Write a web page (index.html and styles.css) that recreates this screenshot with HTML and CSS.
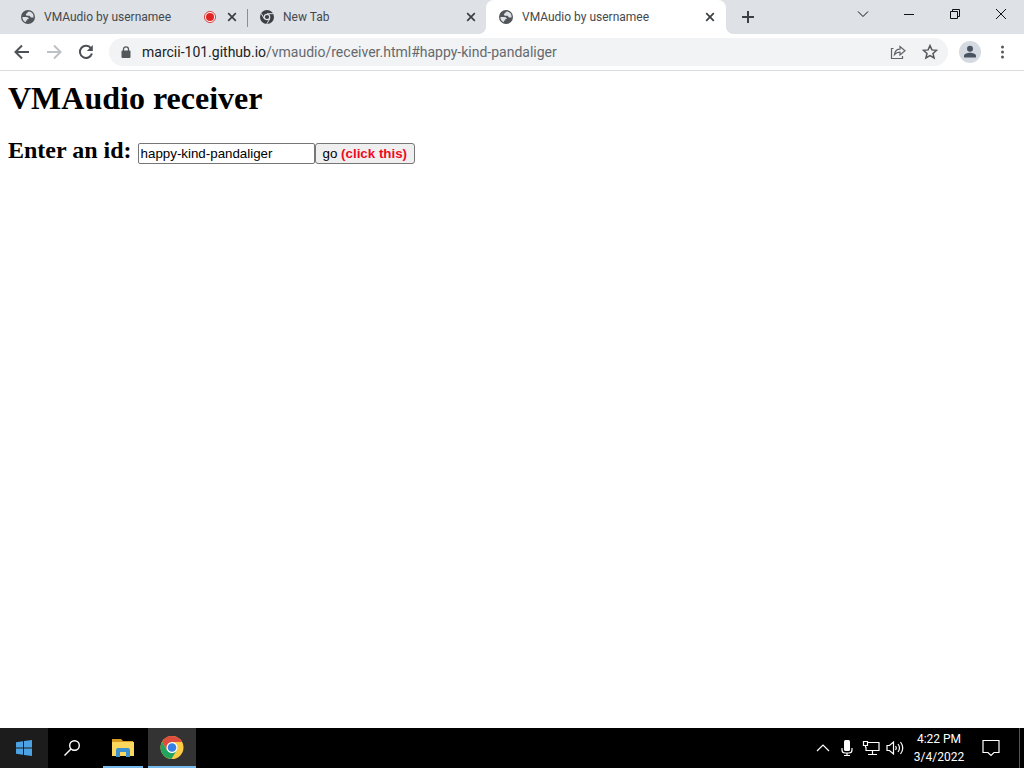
FILE: index.html
```html
<!DOCTYPE html>
<html lang="en">
<head>
<meta charset="utf-8">
<meta name="viewport" content="width=device-width, initial-scale=1">
<title>VMAudio by usernamee</title>
<link rel="stylesheet" href="styles.css">
</head>
<body>
<svg class="defs" aria-hidden="true">
  <symbol id="globe" viewBox="0 0 14 14">
    <circle cx="7" cy="7" r="7" fill="#515559"/>
    <path d="M8.200 1.600C6.200 1.800 6.600 3.200 5.600 3.500 4.300 4 4.700 5.700 6.300 5.700h1.900c1.200 0 1 1.900 2.300 1.900h2A5.500 5.500 0 0 0 8.200 1.600zM1.400 6.900h3.800c1.700 0 2.600.8 2.600 2.100H6.300v1.600H4.900v1.600A5.500 5.500 0 0 1 1.400 6.900z" fill="#dee1e6"/>
  </symbol>
  <symbol id="close" viewBox="0 0 10 10">
    <path d="M1.200 1.200l7.600 7.600M8.800 1.200L1.200 8.800" fill="none" stroke="#3c4043" stroke-width="1.700"/>
  </symbol>
</svg>
<div class="screen">
  <header class="tabstrip">
    <div class="tab">
      <svg class="favicon"><use href="#globe"/></svg>
      <span class="tab-title">VMAudio by usernamee</span>
      <svg class="recording" viewBox="0 0 12 12"><circle cx="6" cy="6" r="5.500" fill="#fff" stroke="#d93838"/><circle cx="6" cy="6" r="4" fill="#e02424"/></svg>
      <button class="tab-close" aria-label="Close tab"><svg><use href="#close"/></svg></button>
    </div>
    <div class="tab divided">
      <svg class="favicon" viewBox="0 0 14 14"><circle cx="7" cy="7" r="7" fill="#3c4043"/><circle cx="7" cy="7" r="2.700" fill="#3c4043" stroke="#dee1e6" stroke-width="1.200"/><path d="M7 3.700h6.200M4.200 8.700L1.200 3.400M9.800 8.700l-3 5.200" fill="none" stroke="#dee1e6" stroke-width="1"/></svg>
      <span class="tab-title">New Tab</span>
      <button class="tab-close" aria-label="Close tab"><svg><use href="#close"/></svg></button>
    </div>
    <div class="tab active">
      <svg class="favicon"><use href="#globe"/></svg>
      <span class="tab-title">VMAudio by usernamee</span>
      <button class="tab-close" aria-label="Close tab"><svg><use href="#close"/></svg></button>
    </div>
    <button class="new-tab" aria-label="New tab"><svg viewBox="0 0 12 12"><path d="M6 0v12M0 6h12" stroke="#3c4043" stroke-width="2"/></svg></button>
    <div class="window-controls">
      <button aria-label="Search tabs"><svg viewBox="0 0 12 12"><path d="M1 3.500l5 5 5-5"/></svg></button>
      <button aria-label="Minimize"><svg viewBox="0 0 12 12"><path d="M1 6.500h10"/></svg></button>
      <button aria-label="Restore"><svg viewBox="0 0 12 12"><path d="M1.500 3.500h7v7h-7zM3.500 3.500v-2h7v7h-2"/></svg></button>
      <button aria-label="Close window"><svg viewBox="0 0 12 12"><path d="M1 1l10 10M11 1L1 11"/></svg></button>
    </div>
  </header>
  <nav class="toolbar" aria-label="Browser">
    <button class="tool" aria-label="Back"><svg viewBox="0 0 16 16"><path d="M15 8H2M8 1.500L1.500 8 8 14.500" fill="none" stroke="#4d5156" stroke-width="2"/></svg></button>
    <button class="tool" aria-label="Forward" disabled><svg viewBox="0 0 16 16"><path d="M1 8h13M8 1.500L14.500 8 8 14.500" fill="none" stroke="#bdc1c6" stroke-width="2"/></svg></button>
    <button class="tool" aria-label="Reload"><svg viewBox="0 0 16 16"><path d="M13 4.300A6.100 6.100 0 1 0 13.900 9.500" fill="none" stroke="#4d5156" stroke-width="2"/><path d="M14.800 1v6H8.800z" fill="#4d5156"/></svg></button>
    <div class="omnibox">
      <svg class="lock" viewBox="0 0 10 12"><path d="M2.500 5.500V3.300a2.500 2.500 0 0 1 5 0v2.200" fill="none" stroke="#54585d" stroke-width="1.300"/><rect x=".5" y="4.500" width="9" height="7.500" rx="1" fill="#54585d"/></svg>
      <a class="url" href="#happy-kind-pandaliger"><span class="host">marcii-101.github.io</span>/vmaudio/receiver.html#happy-kind-pandaliger</a>
      <button class="tool" aria-label="Share"><svg viewBox="0 0 16 16"><path d="M3.500 4.500H1.500v10h11V12M4.500 10.500C5 7 7 5.200 10 5.200V2.500l5 4.200-5 4.200V8.200c-2.500 0-4 .6-5.500 2.300z" fill="none" stroke="#5f6368" stroke-width="1.200"/></svg></button>
      <button class="tool" aria-label="Bookmark"><svg viewBox="0 0 16 16"><path d="M8 1.600l1.900 4.300 4.700.4-3.600 3.100 1.100 4.600L8 11.600 3.900 14 5 9.400 1.400 6.300l4.700-.4z" fill="none" stroke="#54585d" stroke-width="1.500"/></svg></button>
    </div>
    <button class="tool profile" aria-label="Profile"><svg viewBox="0 0 22 22"><circle cx="11" cy="11" r="11" fill="#d5dae1"/><circle cx="11" cy="7.800" r="3" fill="#4a5361"/><path d="M5 16.500v-1.700c0-2 3.500-3 6-3s6 1 6 3v1.700z" fill="#4a5361"/></svg></button>
    <button class="tool" aria-label="Menu"><svg viewBox="0 0 16 16" fill="#54585d"><circle cx="8.500" cy="3" r="1.500"/><circle cx="8.500" cy="8" r="1.500"/><circle cx="8.500" cy="13" r="1.500"/></svg></button>
  </nav>
  <main class="page">
    <h1>VMAudio receiver</h1>
    <h2><label for="receiver-id">Enter an id:</label> <input class="receiver-id" id="receiver-id" type="text" value="happy-kind-pandaliger" spellcheck="false"><button class="go">go <b>(click this)</b></button></h2>
  </main>
  <footer class="taskbar">
    <button class="task start" aria-label="Start"><svg viewBox="0 0 16 16" fill="#4ba3e3"><path d="M0 2.300l7-1v6.200H0zM8 1.100L16 0v7.500H8zM0 8.500h7v6.200l-7-1zM8 8.500h8V16l-8-1.100z"/></svg></button>
    <button class="task" aria-label="Search"><svg viewBox="0 0 16 16" fill="none" stroke="#fff" stroke-width="1.400"><circle cx="10.500" cy="5.500" r="4.800"/><path d="M7 9L.5 15.500"/></svg></button>
    <button class="task running" aria-label="File Explorer"><svg class="folder" viewBox="0 0 22 20"><path d="M0 2h9l2 2h10v4H0z" fill="#d99c20"/><path d="M0 5h22v14H0z" fill="#fbd85d"/><path d="M4 20v-7q0-2 2-2h10q2 0 2 2v7h-4v-5H8v5z" fill="#3c91d0"/></svg></button>
    <button class="task current" aria-label="Chrome"><svg class="chrome" viewBox="0 0 24 24"><circle cx="12" cy="12.500" r="11.500" fill="#fbcb43"/><path d="M2 6.800A11.500 11.500 0 0 1 22 7H12L7.200 15.200z" fill="#df4d3e"/><path d="M2 6.800A11.500 11.500 0 0 0 11.400 24l5.400-8.700L12 18l-5-2.700z" fill="#22a35e"/><circle cx="12" cy="12.500" r="5.500" fill="#fff"/><circle cx="12" cy="12.500" r="4.300" fill="#377fe5"/></svg></button>
    <div class="tray">
      <button aria-label="Show hidden icons"><svg viewBox="0 0 18 16"><path d="M3 11l6-6 6 6"/></svg></button>
      <button aria-label="Microphone"><svg viewBox="0 0 18 16"><rect x="6" y="0" width="6" height="11" rx="1.500" fill="#fff" stroke="none"/><path d="M4 8v2q0 3 3 3h4q3 0 3-3V8M9 13v3M6 15.500h6"/></svg></button>
      <button aria-label="Network"><svg viewBox="0 0 18 16"><path d="M6 2.500h11v8H4V7M10.500 10.500v4M6 14.500h9M1.500 1.500h4v4h-4zM3.500 5.500v2"/></svg></button>
      <button aria-label="Volume"><svg viewBox="0 0 18 16"><path d="M1 5.500h2.500L7.500 2v12l-4-3.500H1zM9.500 6q1.500 2 0 4M12 4q3 4 0 8M14.500 2q4.500 6 0 12"/></svg></button>
    </div>
    <time class="clock" datetime="2022-03-04T16:22"><span>4:22 PM</span><span>3/4/2022</span></time>
    <button class="notifications" aria-label="Notifications"><svg viewBox="0 0 18 18"><path d="M1 1.500h16v12h-5l-3 3-3-3H1z"/></svg></button>
    <button class="show-desktop" aria-label="Show desktop"></button>
  </footer>
</div>
</body>
</html>
```
FILE: styles.css
```css
* { box-sizing: border-box; }

body {
  margin: 0;
  background: #fff;
  font-family: Roboto, "Noto Sans", sans-serif;
}

button {
  padding: 0;
  border: 0;
  background: none;
}

svg { display: block; }

.defs {
  position: absolute;
  width: 0;
  height: 0;
}

.screen {
  display: flex;
  flex-direction: column;
  min-height: 100vh;
}

/* Tab strip */
.tabstrip {
  display: flex;
  height: 34px;
  padding-left: 8px;
  background: #dee1e6;
}

.tab {
  display: flex;
  align-items: center;
  flex: 0 1 239px;
  min-width: 0;
  padding: 0 10px 0 13px;
  color: #45494d;
  font-size: 12px;
}

.divided {
  background: linear-gradient(#8b8f94, #8b8f94) 0 9px / 1px 18px no-repeat;
}

.active {
  position: relative;
  flex-basis: 240px;
  padding-right: 11px;
  border-radius: 8px 8px 0 0;
  background: #fff;
}

.active::before,
.active::after {
  content: "";
  position: absolute;
  bottom: 0;
  width: 8px;
  height: 8px;
}

.active::before {
  right: 100%;
  background: radial-gradient(circle at 0 0, transparent 8px, #fff 8px);
}

.active::after {
  left: 100%;
  background: radial-gradient(circle at 100% 0, transparent 8px, #fff 8px);
}

.favicon {
  flex: none;
  width: 14px;
  height: 14px;
  margin-right: 9px;
}

.tab-title {
  flex: 1;
  overflow: hidden;
  white-space: nowrap;
}

.recording {
  width: 12px;
  height: 12px;
  margin-right: 11px;
}

.tab-close svg {
  width: 10px;
  height: 10px;
}

.new-tab {
  display: grid;
  place-items: center;
  width: 28px;
  margin-left: 8px;
}

.new-tab svg {
  width: 12px;
  height: 12px;
}

.window-controls {
  display: flex;
  height: 28px;
  margin-left: auto;
}

.window-controls button {
  display: grid;
  place-items: center;
  width: 46px;
}

.window-controls svg {
  width: 12px;
  height: 12px;
  fill: none;
  stroke: #111;
}

/* Toolbar */
.toolbar {
  display: flex;
  align-items: center;
  gap: 4px;
  height: 37px;
  padding: 0 8px;
  border-bottom: 1px solid #dadce0;
}

.tool {
  display: grid;
  flex: none;
  place-items: center;
  width: 28px;
  height: 28px;
}

.tool svg {
  width: 16px;
  height: 16px;
}

.profile svg {
  width: 22px;
  height: 22px;
}

.omnibox {
  display: flex;
  align-items: center;
  flex: 1;
  gap: 4px;
  min-width: 0;
  height: 28px;
  margin: 0 4px 0 5px;
  padding: 0 4px 0 12px;
  border-radius: 14px;
  background: #f1f3f4;
}

.lock {
  flex: none;
  width: 10px;
  height: 12px;
  margin-right: 7px;
}

.url {
  flex: 1;
  overflow: hidden;
  color: #65696e;
  font-size: 14px;
  text-decoration: none;
  white-space: nowrap;
}

.host { color: #202124; }

/* Receiver page */
.page {
  flex: 1;
  padding: 9px 8px;
  color: #000;
  font-family: "Liberation Serif", serif;
}

.page h1 {
  margin: 0 0 19px;
  font-size: 32px;
  line-height: 37px;
}

.page h2 {
  margin: 0;
  font-size: 24px;
  line-height: 28px;
}

.receiver-id,
.go {
  height: 21px;
  font-family: "Liberation Sans", sans-serif;
}

.receiver-id {
  width: 177px;
  padding: 1px 2px;
  border: 1px solid #767676;
  border-radius: 2px;
}

.go {
  padding: 0 7px;
  border: 1px solid #767676;
  border-radius: 3px;
  background: #efefef;
}

.go b { color: #f00a1e; }

/* Taskbar */
.taskbar {
  display: flex;
  height: 40px;
  background: #000;
  color: #fff;
}

.task {
  display: grid;
  place-items: center;
  width: 48px;
}

.task svg {
  width: 16px;
  height: 16px;
}

.task .folder {
  width: 22px;
  height: 20px;
}

.task .chrome {
  width: 24px;
  height: 24px;
}

.start { background: #1c1c1d; }

.running {
  width: 40px;
  margin: 0 5px 0 7px;
  border-bottom: 2px solid #76b9ed;
}

.current {
  border-bottom: 2px solid #76b9ed;
  background: #333;
}

.tray {
  display: flex;
  align-items: center;
  gap: 6px;
  margin-left: auto;
}

.tray svg {
  width: 18px;
  height: 16px;
}

.tray svg,
.notifications svg {
  fill: none;
  stroke: #fff;
  stroke-width: 1.2;
}

.clock {
  display: flex;
  flex-direction: column;
  justify-content: center;
  width: 70px;
  font-size: 12px;
  line-height: 18px;
  text-align: center;
}

.notifications {
  display: grid;
  place-items: center;
  width: 34px;
}

.notifications svg {
  width: 18px;
  height: 18px;
}

.show-desktop {
  width: 5px;
  margin-left: 11px;
  border-left: 1px solid #555;
}
```
